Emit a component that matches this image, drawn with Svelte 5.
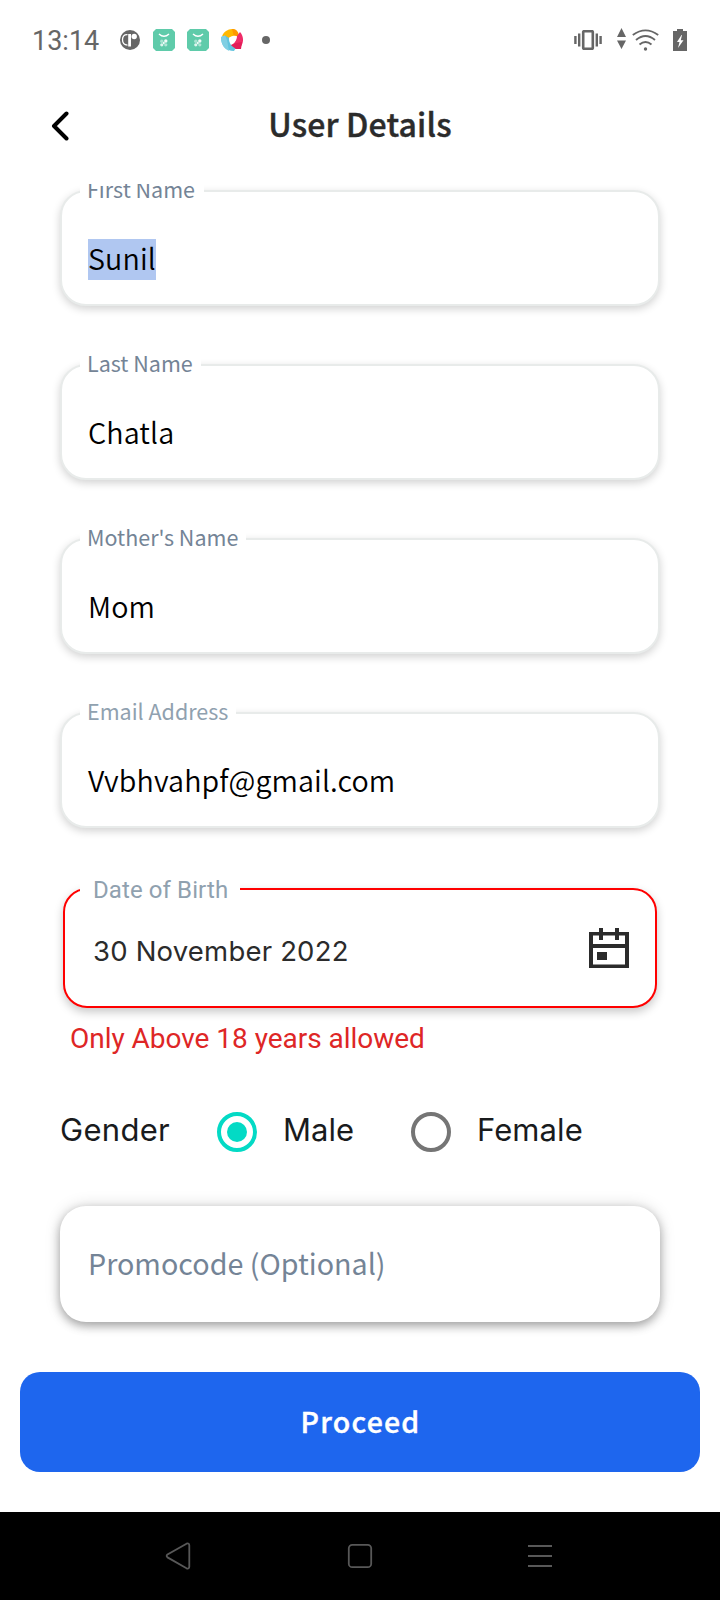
<script>
  const fields = [
    { label: 'First Name', value: 'Sunil', notch: 124, selected: true },
    { label: 'Last Name', value: 'Chatla', notch: 121 },
    { label: "Mother's Name", value: 'Mom', notch: 166 },
    { label: 'Email Address', value: 'Vvbhvahpf@gmail.com', notch: 156, pale: true }
  ];
</script>

{#snippet storeIcon()}
  <svg width="22" height="22" viewBox="0 0 22 22">
    <path d="M3 0H19L22 3V19L19 22H3L0 19V3Z" fill="#5fcbaa" />
    <path d="M6 5q5 4.600 10 0" fill="none" stroke="#fff" stroke-width="1.400" />
    <g fill="#fff">
      <circle cx="8.800" cy="12.200" r="1.700" opacity=".45" />
      <circle cx="12.800" cy="12" r="1.700" opacity=".9" />
      <circle cx="8.800" cy="15.800" r="1.600" opacity=".8" />
      <circle cx="12.800" cy="15.800" r="1.600" opacity=".5" />
      <circle cx="10.800" cy="13.900" r="1" />
    </g>
  </svg>
{/snippet}

<div class="screen">
  <div class="status">
    <span class="clock">13:14</span>
    <div class="notifications">
      <svg width="20" height="20" viewBox="0 0 20 20">
        <circle cx="10" cy="10" r="10" fill="#666" />
        <path d="M7.500 4.700C4 4.400 2.500 6.500 2.500 9.800c0 3.300 1.700 5.200 5 5.400" fill="none" stroke="#fff" stroke-width="1.300" />
        <path d="M8.200 4H11V16.500H8.200Z" fill="#fff" />
        <circle cx="14.200" cy="6.500" r="2.700" fill="#fff" />
      </svg>
      {@render storeIcon()}
      {@render storeIcon()}
      <svg width="22" height="22" viewBox="0 0 22 22">
        <path d="M1 7.500C3 1.500 10-1.500 15 1L17.500 6.500C13 6 9.500 7 7 9.500Z" fill="#ffb800" />
        <path d="M11 0C15 0 18 2.500 18 8L12.500 6Z" fill="#ff9800" />
        <path d="M19 3C23.500 8 23 16 17.500 20L9 16.500C13.500 14.500 16 11 16 7Z" fill="#ef2c68" />
        <path d="M21 13L20 20H13L9 16.500L15 14Z" fill="#e31c58" />
        <path d="M0 8C0 17 5 22 13 22L14.500 19.500C10 17 8 14 8 9L4 6.500Z" fill="#62c4de" />
        <path d="M0 8L4 6.500L6 11L8 22Q0 18 0 8Z" fill="#80cfe3" />
        <path d="M8.200 9.500L12 7.600L14.900 9.500C14.800 12 13.500 14 10.900 15.500Q8.600 13 8.200 9.500Z" fill="#fff" />
      </svg>
      <i class="more"></i>
    </div>
    <div class="system">
      <svg class="vibrate" width="28" height="20" viewBox="0 0 28 20">
        <rect x="9.200" y="1.200" width="9.600" height="17.600" rx=".8" fill="none" stroke="#666" stroke-width="2.600" />
        <path d="M5.200 3.500V16.500M22.800 3.500V16.500M1.400 6V14M26.600 6V14" stroke="#666" stroke-width="2.400" />
      </svg>
      <svg class="traffic" width="9" height="21" viewBox="0 0 9 21">
        <path d="M4.500 0L9 9H0ZM4.500 21L0 12.500H9Z" fill="#666" />
      </svg>
      <svg class="wifi" width="27" height="22" viewBox="0 0 27 22">
        <path d="M.8 6Q13.500-3.200 26.200 6M4 11Q13.500 3 23 11M7.500 15.500Q13.500 10.500 19.500 15.500" fill="none" stroke="#666" stroke-width="1.900" />
        <circle cx="13.500" cy="20" r="1.700" fill="#666" />
      </svg>
      <svg width="14" height="22" viewBox="0 0 14 22">
        <path d="M4 0H10V2H14V22H0V2H4Z" fill="#666" />
        <path d="M8.500 6L4 13H6.500L5 19L10.500 11.300H7.800L9 6Z" fill="#fff" />
      </svg>
    </div>
  </div>

  <header>
    <svg width="18" height="30" viewBox="0 0 18 30">
      <path d="M15.500 2.500L3 15L15.500 27.500" fill="none" stroke="#000" stroke-width="4" stroke-linecap="round" stroke-linejoin="round" />
    </svg>
    <h1>User Details</h1>
  </header>

  <main>
    {#each fields as f}
      <div class="field">
        <label class:pale={f.pale} style="width: {f.notch}px">{f.label}</label>
        <span class="value" class:selected={f.selected}>{f.value}</span>
      </div>
    {/each}

    <div class="dob">
      <label>Date of Birth</label>
      <span>30 November 2022</span>
      <svg width="40" height="40" viewBox="0 0 40 40" fill="#2b2b2b">
        <path fill-rule="evenodd" d="M0 4H40V40H0ZM4 7.500V16H36V7.500ZM4 20V36.500H36V20Z" />
        <path d="M10 0H14V12H10ZM26 0H30V12H26ZM8 24H18V32H8Z" />
      </svg>
    </div>
    <p class="error">Only Above 18 years allowed</p>

    <div class="gender">
      <span class="title">Gender</span>
      <i class="radio on"></i>
      <span class="male">Male</span>
      <i class="radio"></i>
      <span class="female">Female</span>
    </div>

    <div class="promo">Promocode (Optional)</div>
  </main>

  <button>Proceed</button>

  <nav>
    <svg width="26" height="28" viewBox="0 0 26 28"><path d="M21.500 1.700L2.500 12.400Q.8 14 2.500 15.400L21.500 26.300Q24.300 27.300 24.300 24.500V3.500Q24.300 .7 21.500 1.700Z" /></svg>
    <svg width="26" height="26" viewBox="0 0 26 26"><rect x="1.800" y="1.800" width="22.400" height="22.400" rx="3.500" /></svg>
    <svg width="24" height="24" viewBox="0 0 24 24"><path d="M0 2H24M0 12H24M0 22H24" /></svg>
  </nav>
</div>

<style>
  :global(body) { margin: 0; background: #fff; }
  * { box-sizing: border-box; }
  svg { display: block; flex: none; }
  .screen {
    width: 720px; height: 1600px; display: flex; flex-direction: column; overflow: hidden;
    background: #fff; font-family: "Noto Sans CJK SC", "Noto Sans", sans-serif;
  }
  .status { height: 80px; flex: none; display: flex; align-items: center; padding: 0 33px 0 32px; font-family: Roboto, sans-serif; color: #666; }
  .clock { font-size: 27px; line-height: 32px; width: 88px; padding-top: 2px; }
  .notifications { display: flex; align-items: center; gap: 12px; flex: 1; }
  .notifications svg:first-child { margin-right: 1px; }
  .more { width: 8px; height: 8px; border-radius: 50%; background: #666; margin-left: 7px; }
  .system { display: flex; align-items: center; }
  .vibrate { margin-right: 15px; }
  .traffic { margin: -3px 6px 0 0; }
  .wifi { margin-right: 14px; }

  header { height: 104px; flex: none; display: grid; grid-template-columns: 1fr auto 1fr; padding: 0 51px; align-items: start; }
  header svg { margin-top: 31px; }
  h1 { margin: 23px 0 0; font-size: 32px; line-height: 40px; font-weight: 500; color: #2b2b2b; white-space: nowrap; letter-spacing: .15px; -webkit-text-stroke: .4px #2b2b2b; }

  main { flex: none; height: 1176px; padding: 6px 60px 0; overflow: hidden; }
  .field {
    position: relative; height: 116px; margin-bottom: 58px; border: 2px solid #e8ebea; border-radius: 26px;
    box-shadow: 0 3px 8px rgba(0, 0, 0, .18); padding: 47px 0 0 26px; background: #fff;
  }
  .field label {
    position: absolute; left: 18px; top: -18px; padding-left: 7px; height: 30px; line-height: 30px;
    font-size: 21.500px; color: #748496; background: #fff; white-space: nowrap;
  }
  .field label.pale { color: #90a1af; }
  .value { display: inline-block; height: 41px; line-height: 37px; font-size: 28.700px; color: #000; vertical-align: top; white-space: nowrap; font-weight: 350; letter-spacing: .1px; }
  .selected { background: #b0c7f1; }

  .dob {
    position: relative; display: flex; height: 120px; margin: 60px 3px 0; border: 2px solid #f00; border-radius: 24px;
    box-shadow: 0 4px 10px rgba(0, 0, 0, .22); background: #fff; padding: 38px 26px 0 28px;
    justify-content: space-between;
  }
  .dob label {
    position: absolute; left: 15px; top: -15px; width: 160px; height: 30px; line-height: 30px; padding-left: 13px;
    background: #fff; font-family: Roboto, sans-serif; font-size: 24px; color: #90a1af; letter-spacing: .1px;
  }
  .dob span { font-family: Inter, Roboto, sans-serif; font-size: 27.500px; line-height: 46px; color: #2b2b2b; font-weight: 400; letter-spacing: .2px; }
  .error { margin: 13px 0 0 10px; font: 28px/35px Roboto, sans-serif; color: #de2626; letter-spacing: -.03px; }

  .gender { display: flex; align-items: center; height: 40px; margin-top: 56px; font: 400 31px/36px Inter, Roboto, sans-serif; color: #191b1d; }
  .gender span { margin-top: -4px; }
  .title { width: 157px; letter-spacing: .3px; }
  .male { width: 128px; padding-left: 26px; flex: none; margin-right: 26px; }
  .female { padding-left: 26px; letter-spacing: .1px; }
  .radio { flex: none; width: 40px; height: 40px; border: 4px solid #757575; border-radius: 50%; display: grid; place-items: center; }
  .radio.on { border-color: #03dac5; }
  .radio.on::after { content: ""; width: 20px; height: 20px; border-radius: 50%; background: #03dac5; }

  .promo {
    height: 116px; margin-top: 54px; border-radius: 26px; background: #fff; padding-left: 28px; line-height: 114px;
    font-size: 28.700px; color: #748496; box-shadow: 0 4px 10px rgba(0, 0, 0, .3), 0 0 16px rgba(0, 0, 0, .15);
  }

  button {
    flex: none; height: 100px; margin: 12px 20px 40px; padding: 0 0 2px 1px; border: 0; border-radius: 20px; background: #1e66ee;
    color: #fff; font: 500 28.500px/36px "Noto Sans CJK SC", "Noto Sans", sans-serif; letter-spacing: 1.200px; -webkit-text-stroke: .4px #fff;
  }
  nav { flex: none; height: 88px; background: #000; display: flex; justify-content: space-between; align-items: center; padding: 0 168px 0 165px; }
  nav svg { fill: none; stroke: #585858; stroke-width: 1.800; }
</style>
